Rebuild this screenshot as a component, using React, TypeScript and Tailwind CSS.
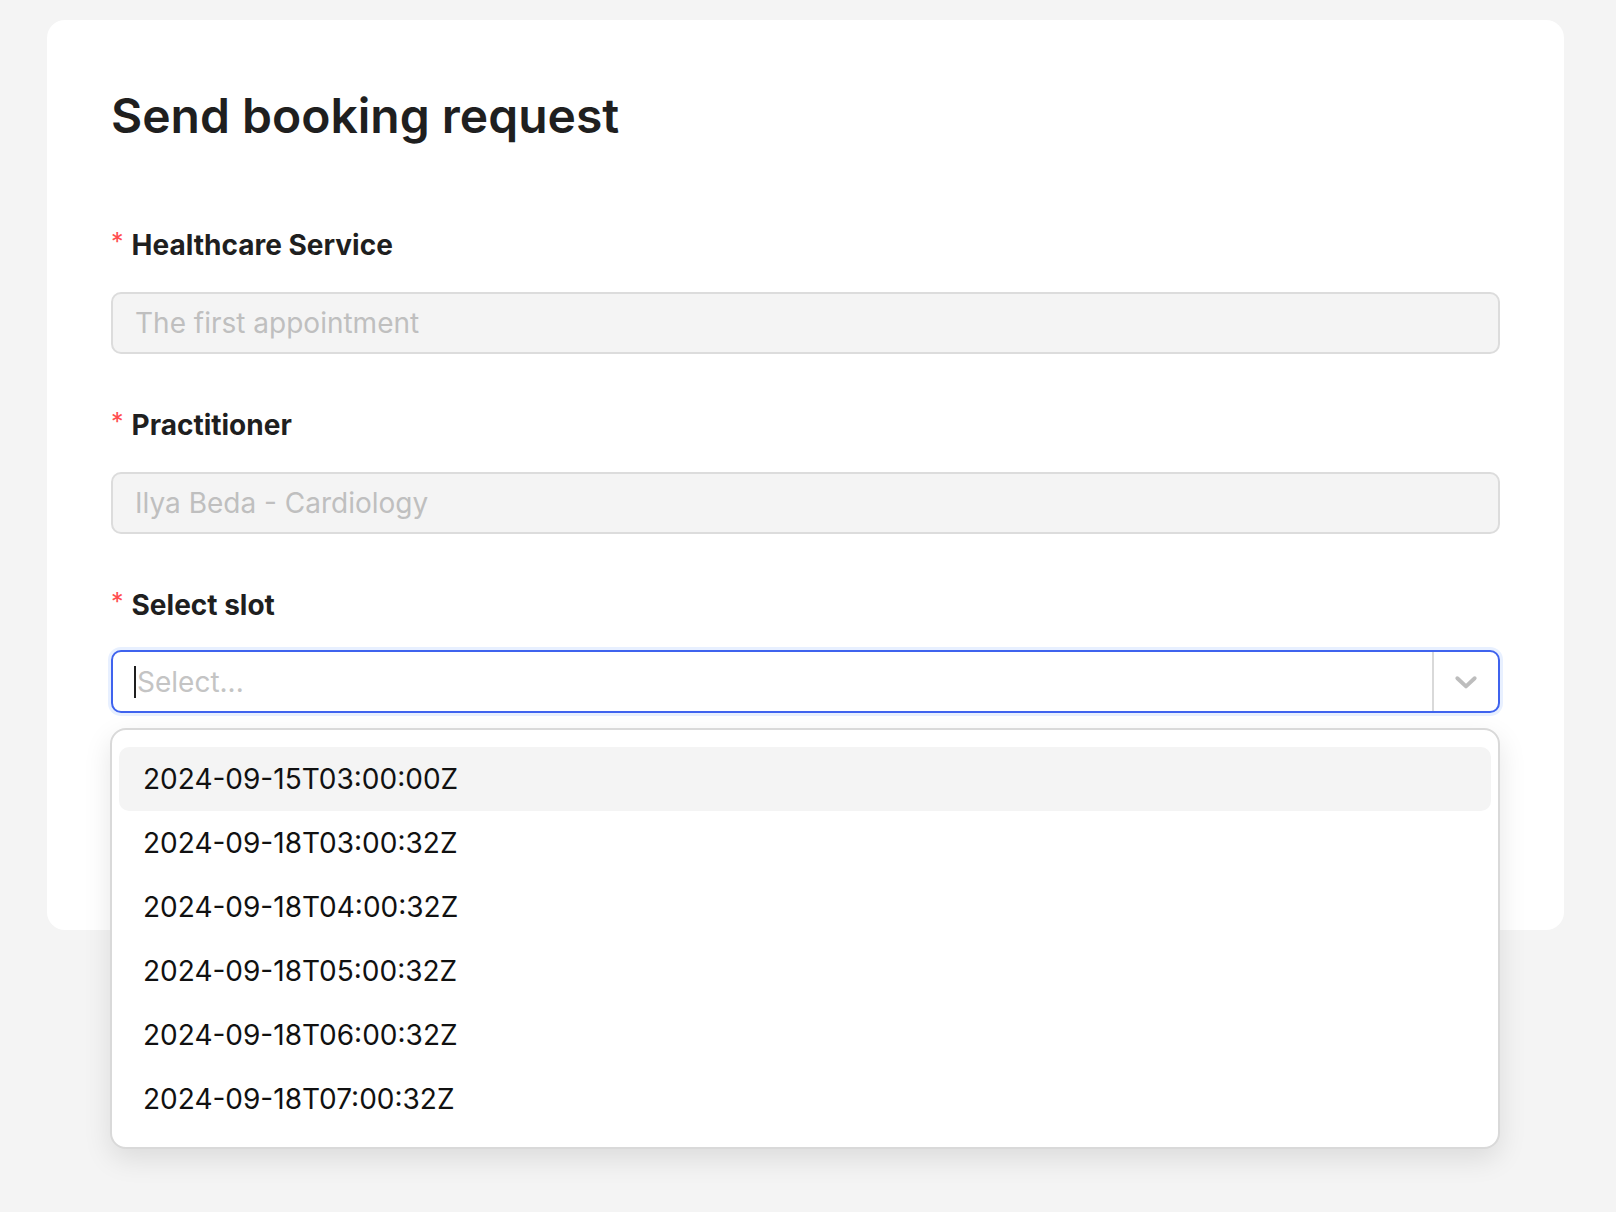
import React from "react";

const slots = [
  "2024-09-15T03:00:00Z",
  "2024-09-18T03:00:32Z",
  "2024-09-18T04:00:32Z",
  "2024-09-18T05:00:32Z",
  "2024-09-18T06:00:32Z",
  "2024-09-18T07:00:32Z",
];

function Label({ children }: { children: React.ReactNode }) {
  return (
    <div className="flex items-center h-10 text-[28px] font-bold text-[#1f1f1f] leading-10">
      <span className="text-[#ff4d4f] text-[25px] font-normal mr-[8px] -mt-[6px] leading-none">*</span>
      <span>{children}</span>
    </div>
  );
}

function DisabledInput({ value }: { value: string }) {
  return (
    <div className="h-[62px] rounded-[10px] border-2 border-[#dcdcdc] bg-[#f4f4f4] flex items-center px-[22px] text-[28px] text-[#bfbfbf]">
      {value}
    </div>
  );
}

export default function App() {
  return (
    <div
      className="min-h-screen bg-[#f4f4f4] pt-5 pl-[47px]"
      style={{ fontFamily: "Inter, 'Noto Sans', sans-serif" }}
    >
      <div className="w-[1517px] h-[910px] bg-white rounded-[18px] px-16 pt-[65px]">
        <h1 className="text-[48px] leading-[62px] font-semibold text-[#1f1f1f]">
          Send booking request
        </h1>
        <div className="mt-[78px]">
          <Label>Healthcare Service</Label>
          <div className="mt-[27px]">
            <DisabledInput value="The first appointment" />
          </div>
        </div>
        <div className="mt-[51px]">
          <Label>Practitioner</Label>
          <div className="mt-[27px]">
            <DisabledInput value="Ilya Beda - Cardiology" />
          </div>
        </div>
        <div className="mt-[51px]">
          <Label>Select slot</Label>
          <div className="mt-[25px] relative">
            <div className="h-[63px] rounded-[10px] border-2 border-[#3f63ee] shadow-[0_0_0_3px_#e8f0ff] flex items-stretch bg-white">
              <div className="flex-1 flex items-center pl-[21px] text-[28px] text-[#c4c4c4]">
                <span className="w-[2px] h-[32px] bg-[#1f1f1f] mr-[1px]" />
                Select...
              </div>
              <div className="w-[2px] bg-[#d9d9d9]" />
              <div className="w-[64px] flex items-center justify-center">
                <svg width="26" height="26" viewBox="0 0 24 24" fill="none" stroke="#bdbdbd" strokeWidth="3.6" strokeLinecap="round" strokeLinejoin="round">
                  <path d="M4 8.5l8 7.5 8-7.5" />
                </svg>
              </div>
            </div>
            <div className="absolute left-[-1px] right-0 top-[calc(100%+15px)] bg-white rounded-[16px] border-2 border-[#d9d9d9] shadow-[0_10px_28px_rgba(0,0,0,0.10)] pt-[17px] pb-[16px] px-[7px] z-10">
              {slots.map((s, i) => (
                <div
                  key={s}
                  className={
                    "h-16 flex items-center px-6 text-[28px] text-[#111] rounded-[10px] " +
                    (i === 0 ? "bg-[#f4f4f4]" : "")
                  }
                >
                  {s}
                </div>
              ))}
            </div>
          </div>
        </div>
      </div>
    </div>
  );
}
